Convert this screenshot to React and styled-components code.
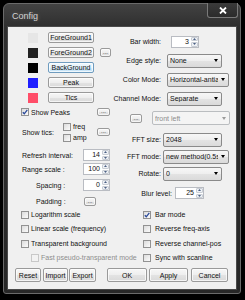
import styled, { createGlobalStyle, css } from 'styled-components';

const GlobalStyle = createGlobalStyle`
  html, body {
    margin: 0;
    padding: 0;
    background: #000;
  }
  body {
    width: 245px;
    height: 300px;
    overflow: hidden;
    font-family: "Liberation Sans", Arial, sans-serif;
    font-size: 7px;
    color: #111;
  }
`;

const Window = styled.div`
  box-sizing: border-box;
  margin: 3px 0 0 3px;
  width: 238px;
  height: 291px;
  border: 1px solid #6a6a6a;
  border-radius: 6px 6px 3px 3px;
  background: linear-gradient(#424242, #2e2e2e 24px, #272727);
  padding: 0 4px 4px 4px;
  display: flex;
  flex-direction: column;
`;

const TitleBar = styled.div`
  height: 23px;
  display: flex;
  align-items: flex-start;
`;

const Title = styled.span`
  margin: 7px 0 0 4px;
  font-size: 9px;
  color: #d2d2d2;
  text-shadow: 0 0 4px rgba(255, 255, 255, 0.25);
`;

const CloseBtn = styled.div`
  box-sizing: border-box;
  margin: -1px -2px 0 auto;
  width: 31px;
  height: 15px;
  border: 1px solid #7a7a7a;
  border-top: none;
  border-radius: 0 0 3px 3px;
  background: linear-gradient(#3a3a3a, #2b2b2b);
  display: flex;
  align-items: center;
  justify-content: center;
`;

const Client = styled.div`
  height: 262px;
  background: #f0f0f0;
  box-shadow: 0 0 0 1px #4a4a4a;
  display: flex;
  flex-direction: column;
`;

const Top = styled.div`
  display: grid;
  grid-template-columns: 110px 118px;
`;

const Col = styled.div`
  display: flex;
  flex-direction: column;
  padding-top: ${(p) => p.pt}px;
`;

const Row = styled.div`
  height: ${(p) => p.h}px;
  margin-top: ${(p) => p.mt || 0}px;
  padding-left: ${(p) => p.pl || 0}px;
  display: flex;
  align-items: center;
  white-space: nowrap;
`;

const Swatch = styled.div`
  width: 10px;
  height: 10px;
  background: ${(p) => p.c};
  margin-right: 10px;
`;

const Btn = styled.div`
  box-sizing: border-box;
  width: ${(p) => p.w}px;
  height: ${(p) => p.h || 11}px;
  margin-left: ${(p) => p.ml || 0}px;
  margin-right: ${(p) => p.mr || 0}px;
  border: 1px solid #9a9a9a;
  border-radius: 2px;
  background: linear-gradient(#f7f7f7, #eeeeee 50%, #e3e3e3 51%, #dadada);
  box-shadow: inset 0 0 0 1px rgba(255, 255, 255, 0.7);
  display: flex;
  align-items: center;
  justify-content: center;
  line-height: 1;
  white-space: nowrap;
  ${(p) =>
    p.focus &&
    css`
      border-color: #6f9cbf;
      background: linear-gradient(#f0f8fd, #e3f2fb 50%, #d2eafa 51%, #c4e2f6);
    `}
  ${(p) =>
    p.auto &&
    css`
      margin-left: auto;
    `}
`;

const Dots = styled(Btn)`
  font-size: 6px;
  align-items: flex-end;
  padding-bottom: 1px;
`;

const Box = styled.div`
  box-sizing: border-box;
  width: 8px;
  height: 8px;
  flex: none;
  border: 1px solid ${(p) => (p.disabled ? '#c8c8c8' : '#929292')};
  background: ${(p) => (p.disabled ? '#f2f2f2' : 'linear-gradient(135deg, #dcdcdc, #fbfbfb)')};
  margin-right: ${(p) => p.gap || 2}px;
  display: flex;
  align-items: center;
  justify-content: center;
`;

const Text = styled.span`
  color: ${(p) => (p.disabled ? '#8d8d8d' : 'inherit')};
  white-space: nowrap;
`;

const TicsLabel = styled.span`
  width: 41px;
`;

const Stack = styled.div`
  display: flex;
  flex-direction: column;
`;

const StackItem = styled.div`
  height: 11px;
  display: flex;
  align-items: center;
`;

const Spin = styled.div`
  box-sizing: border-box;
  width: ${(p) => p.w}px;
  height: 12px;
  margin-left: ${(p) => (p.auto ? 'auto' : `${p.ml || 0}px`)};
  margin-right: ${(p) => p.mr || 0}px;
  border: 1px solid #b9bcc2;
  background: #fff;
  display: flex;
`;

const SpinValue = styled.span`
  flex: 1;
  text-align: right;
  padding-right: 2px;
  line-height: 10px;
`;

const SpinArrows = styled.div`
  width: 7px;
  display: flex;
  flex-direction: column;
  gap: 1px;
`;

const SpinPart = styled.div`
  flex: 1;
  border: 1px solid #c8cdd4;
  border-radius: 1px;
  background: #eef1f5;
  display: flex;
  align-items: center;
  justify-content: center;
`;

const LabelCell = styled.div`
  width: ${(p) => p.w}px;
  display: flex;
  justify-content: flex-end;
  white-space: nowrap;
  flex: none;
`;

const Combo = styled.div`
  box-sizing: border-box;
  width: ${(p) => p.w}px;
  height: 14px;
  margin-left: ${(p) => p.ml || 0}px;
  border: 1px solid ${(p) => (p.disabled ? '#babdc0' : '#8a8a8a')};
  border-radius: 2px;
  background: ${(p) =>
    p.disabled ? '#f4f4f4' : 'linear-gradient(#f7f7f7, #eeeeee 50%, #e3e3e3 51%, #dadada)'};
  color: ${(p) => (p.disabled ? '#8d8d8d' : 'inherit')};
  display: flex;
  align-items: center;
  padding: 0 3px 0 2px;
  overflow: hidden;
`;

const ComboText = styled.span`
  flex: 1;
  overflow: hidden;
  white-space: nowrap;
`;

const Arrow = styled.span`
  width: 0;
  height: 0;
  margin-left: 3px;
  flex: none;
  border-left: 2.5px solid transparent;
  border-right: 2.5px solid transparent;
  border-top: 3px solid ${(p) => (p.disabled ? '#9a9a9a' : '#000')};
`;

const CheckGrid = styled.div`
  display: grid;
  grid-template-columns: 122px 1fr;
  grid-template-rows: 13px 15px 15px 13px;
  padding-left: 13px;
`;

const CheckCell = styled.div`
  display: flex;
  align-items: center;
  padding-left: ${(p) => p.pl || 0}px;
  white-space: nowrap;
`;

const ButtonRow = styled.div`
  height: 14px;
  margin-top: 4px;
  padding-left: 7px;
  display: flex;
`;

const Tick = () => (
  <svg width="6" height="6" viewBox="0 0 6 6">
    <path d="M0.8 3.2 L2.3 4.8 L5.3 0.8" fill="none" stroke="#2b4a9a" strokeWidth="1.3" />
  </svg>
);

const Check = ({ checked, disabled, gap, children }) => (
  <>
    <Box disabled={disabled} gap={gap}>
      {checked && <Tick />}
    </Box>
    <Text disabled={disabled}>{children}</Text>
  </>
);

const Up = () => (
  <svg width="3" height="2" viewBox="0 0 3 2">
    <path d="M0 2 L1.5 0 L3 2 Z" fill="#4d6185" />
  </svg>
);

const Down = () => (
  <svg width="3" height="2" viewBox="0 0 3 2">
    <path d="M0 0 L3 0 L1.5 2 Z" fill="#4d6185" />
  </svg>
);

const SpinBox = ({ value, ...rest }) => (
  <Spin {...rest}>
    <SpinValue>{value}</SpinValue>
    <SpinArrows>
      <SpinPart>
        <Up />
      </SpinPart>
      <SpinPart>
        <Down />
      </SpinPart>
    </SpinArrows>
  </Spin>
);

const ComboBox = ({ value, disabled, ...rest }) => (
  <Combo disabled={disabled} {...rest}>
    <ComboText>{value}</ComboText>
    <Arrow disabled={disabled} />
  </Combo>
);

const colors = [
  { c: '#e6e6e6', label: 'ForeGround1' },
  { c: '#222222', label: 'ForeGround2', more: true },
  { c: '#000000', label: 'BackGround', focus: true },
  { c: '#1f1fff', label: 'Peak' },
  { c: '#ff4d68', label: 'Tics' },
];

const rightRows = [
  { label: 'Edge style:', value: 'None', w: 55 },
  { label: 'Color Mode:', value: 'Horizontal-antialiasing', w: 62 },
  { label: 'Channel Mode:', value: 'Separate', w: 55 },
];

const fftRows = [
  { label: 'FFT size:', value: '2048', w: 59 },
  { label: 'FFT mode:', value: 'new method(0.5s)', w: 66 },
  { label: 'Rotate:', value: '0', w: 59 },
];

export default function App() {
  return (
    <>
      <GlobalStyle />
      <Window>
        <TitleBar>
          <Title>Config</Title>
          <CloseBtn>
            <svg width="8" height="7" viewBox="0 0 8 7">
              <path d="M1 0.5 L7 6.5 M7 0.5 L1 6.5" stroke="#fff" strokeWidth="1.8" />
            </svg>
          </CloseBtn>
        </TitleBar>
        <Client>
          <Top>
            <Col pt={3}>
              {colors.map((item) => (
                <Row key={item.label} h={15} pl={20}>
                  <Swatch c={item.c} />
                  <Btn w={46} focus={item.focus}>
                    {item.label}
                  </Btn>
                  {item.more && <Dots w={11} h={9} ml={6}>...</Dots>}
                </Row>
              ))}
              <Row h={14} pl={13}>
                <Check checked>Show Peaks</Check>
                <Dots w={13} h={8} auto mr={8}>
                  ...
                </Dots>
              </Row>
              <Row h={26} pl={14}>
                <TicsLabel>Show tics:</TicsLabel>
                <Stack>
                  <StackItem>
                    <Check>freq</Check>
                  </StackItem>
                  <StackItem>
                    <Check>amp</Check>
                  </StackItem>
                </Stack>
                <Dots w={13} h={8} auto mr={8}>
                  ...
                </Dots>
              </Row>
              <Row h={14} mt={3} pl={14}>
                <Text>Refresh interval:</Text>
                <SpinBox value="14" w={27} auto mr={8} />
              </Row>
              <Row h={14} pl={14}>
                <Text>Range scale :</Text>
                <SpinBox value="100" w={27} auto mr={8} />
              </Row>
              <Row h={14} mt={2} pl={28}>
                <Text>Spacing :</Text>
                <SpinBox value="0" w={27} auto mr={8} />
              </Row>
              <Row h={14} mt={2} pl={28}>
                <Text>Padding :</Text>
                <Dots w={12} h={9} auto mr={22}>
                  ...
                </Dots>
              </Row>
            </Col>
            <Col pt={5}>
              <Row h={19}>
                <LabelCell w={43}>Bar width:</LabelCell>
                <SpinBox value="3" w={28} ml={10} />
              </Row>
              {rightRows.map((r) => (
                <Row key={r.label} h={19}>
                  <LabelCell w={43}>{r.label}</LabelCell>
                  <ComboBox value={r.value} w={r.w} ml={6} />
                </Row>
              ))}
              <Row h={20} pl={12}>
                <Dots w={12} h={9}>...</Dots>
                <ComboBox value="front left" w={78} ml={10} disabled />
              </Row>
              {fftRows.map((r, i) => (
                <Row key={r.label} h={17} mt={i === 0 ? 3 : 0}>
                  <LabelCell w={43}>{r.label}</LabelCell>
                  <ComboBox value={r.value} w={r.w} ml={2} />
                </Row>
              ))}
              <Row h={18} mt={2}>
                <LabelCell w={54}>Blur level:</LabelCell>
                <SpinBox value="25" w={29} ml={3} />
              </Row>
            </Col>
          </Top>
          <CheckGrid>
            <CheckCell>
              <Check>Logarithm scale</Check>
            </CheckCell>
            <CheckCell>
              <Check checked gap={4}>Bar mode</Check>
            </CheckCell>
            <CheckCell>
              <Check>Linear scale (frequency)</Check>
            </CheckCell>
            <CheckCell>
              <Check gap={4}>Reverse freq-axis</Check>
            </CheckCell>
            <CheckCell>
              <Check>Transparent background</Check>
            </CheckCell>
            <CheckCell>
              <Check gap={4}>Reverse channel-pos</Check>
            </CheckCell>
            <CheckCell pl={10}>
              <Check disabled>Fast pseudo-transparent mode</Check>
            </CheckCell>
            <CheckCell>
              <Check gap={4}>Sync with scanline</Check>
            </CheckCell>
          </CheckGrid>
          <ButtonRow>
            <Btn w={26} h={14}>Reset</Btn>
            <Btn w={25} h={14} ml={2}>Import</Btn>
            <Btn w={27} h={14} ml={1}>Export</Btn>
            <Btn w={40} h={14} ml={11}>OK</Btn>
            <Btn w={39} h={14} ml={2}>Apply</Btn>
            <Btn w={37} h={14} ml={3}>Cancel</Btn>
          </ButtonRow>
        </Client>
      </Window>
    </>
  );
}
